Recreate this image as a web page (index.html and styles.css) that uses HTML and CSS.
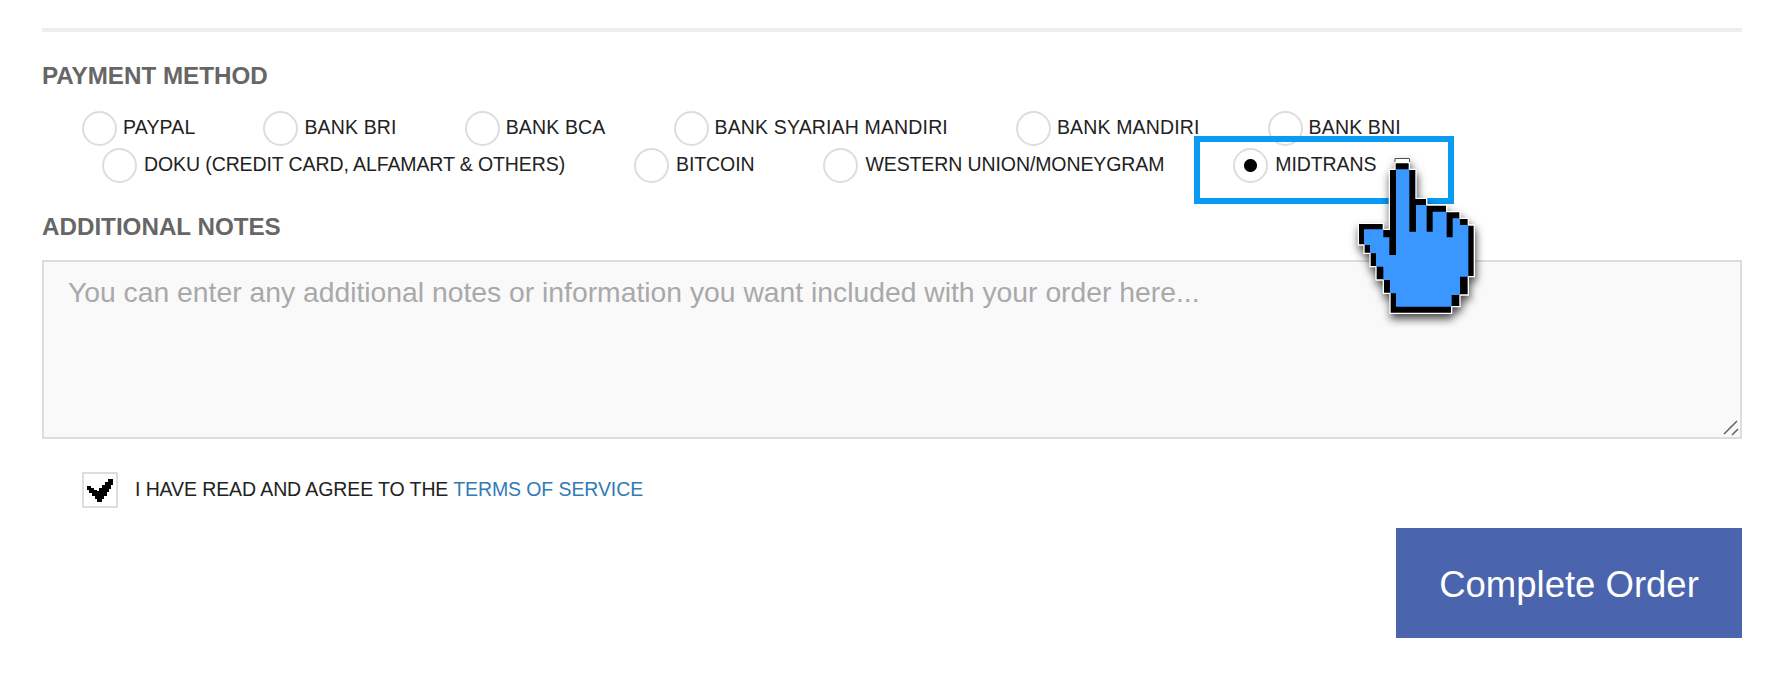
FILE: index.html
```html
<!DOCTYPE html>
<html lang="en">
<head>
<meta charset="UTF-8">
<title>Complete Order</title>
<link rel="stylesheet" href="styles.css">
</head>
<body>
<div class="order-form">
  <hr class="divider">

  <h3 class="section-title">PAYMENT METHOD</h3>
  <div class="methods">
    <div class="method-row">
      <label class="method"><input type="radio" name="method"><span>PAYPAL</span></label>
      <label class="method"><input type="radio" name="method"><span>BANK BRI</span></label>
      <label class="method"><input type="radio" name="method"><span>BANK BCA</span></label>
      <label class="method"><input type="radio" name="method"><span>BANK SYARIAH MANDIRI</span></label>
      <label class="method"><input type="radio" name="method"><span>BANK MANDIRI</span></label>
      <label class="method"><input type="radio" name="method"><span>BANK BNI</span></label>
    </div>
    <div class="method-row second">
      <label class="method"><input type="radio" name="method"><span>DOKU (CREDIT CARD, ALFAMART &amp; OTHERS)</span></label>
      <label class="method"><input type="radio" name="method"><span>BITCOIN</span></label>
      <label class="method"><input type="radio" name="method"><span>WESTERN UNION/MONEYGRAM</span></label>
      <label class="method"><input type="radio" name="method" checked><span>MIDTRANS</span></label>
    </div>
  </div>

  <h3 class="section-title notes-title">ADDITIONAL NOTES</h3>
  <div class="notes-wrap">
    <textarea class="notes" placeholder="You can enter any additional notes or information you want included with your order here..."></textarea>
    <svg class="resize-grip" width="16" height="16" viewBox="0 0 16 16"><path d="M1 14 L14 1 M9 15 L15 9" stroke="#666" stroke-width="1.6" fill="none"/></svg>
  </div>

  <div class="terms">
    <span class="check-box">
      <svg width="32" height="32" viewBox="0 0 32 32"><polygon points="3,12 7,12 7,14 10,14 10,16 13,16 13,17 15,17 15,14 18,14 18,11 21,11 21,8 24,8 24,5 29,5 29,11 27,11 27,15 25,15 25,18 23,18 23,22 20,22 20,25 18,25 18,28 13,28 13,25 11,25 11,22 8,22 8,19 5,19 5,16 3,16" fill="#000"/></svg>
    </span>
    <span class="terms-text">I HAVE READ AND AGREE TO THE <a href="#">TERMS OF SERVICE</a></span>
  </div>

  <div class="actions">
    <button class="complete-btn" type="button">Complete Order</button>
  </div>
</div>

<!-- Markup added on top of the screenshot -->
<div class="highlight"></div>
<svg class="hand" width="150" height="180" viewBox="0 0 450 540">
  <rect x="165" y="26" width="43" height="14" fill="#fff" stroke="#000" stroke-width="2"/>
  <polygon fill="#000" stroke="#fff" stroke-width="4" points="148,58 165,58 165,38 208,38 208,58 228,58 228,145 260,145 260,165 320,165 320,185 360,185 360,205 385,205 385,225 403,225 403,380 385,380 385,435 360,435 360,470 335,470 335,490 150,490 150,430 130,430 130,390 108,390 108,350 90,350 90,310 72,310 72,285 55,285 55,220 130,220 130,238 148,238"/>
  <polygon fill="#3a97ff" points="168,58 208,58 208,245 228,245 228,165 260,165 260,245 278,245 278,185 320,185 320,262 338,262 338,205 360,205 360,225 385,225 385,380 360,380 360,435 335,435 335,470 168,470 168,430 150,430 150,390 130,390 130,350 108,350 108,310 90,310 90,285 72,285 72,238 130,238 130,262 148,262 148,315 168,315"/>
</svg>
</body>
</html>
```

FILE: styles.css
```css
body {
  margin: 0;
  background-color: #ffffff;
  color: #222222;
  font-family: "Liberation Sans", Arial, sans-serif;
  position: relative;
  height: 698px;
  overflow: hidden;
}
.order-form {
  padding: 28px 32px 0 42px;
}
.divider {
  height: 4px;
  margin: 0;
  border: none;
  background-color: #eeeeee;
}
.section-title {
  margin: 29px 0 0;
  color: #666666;
  font-size: 24.2px;
  font-weight: bold;
  line-height: 30px;
}
.methods {
  margin-top: 20px;
  display: flex;
  flex-direction: column;
  gap: 2px;
}
.method-row {
  display: flex;
  gap: 68px;
  padding-left: 40px;
  letter-spacing: 0.15px;
}
.method-row.second {
  gap: 69px;
  padding-left: 60px;
  letter-spacing: -0.1px;
}
.method {
  display: flex;
  align-items: center;
  gap: 6px;
  font-size: 19.5px;
  white-space: nowrap;
}
.method-row.second .method {
  gap: 7px;
}
.method span {
  margin-top: -2px;
}
.method input {
  appearance: none;
  width: 35px;
  height: 35px;
  margin: 0;
  border: 2px solid #dddddd;
  border-radius: 50%;
  background-color: #ffffff;
}
.method input:checked {
  background-image: radial-gradient(circle, #000000 6px, transparent 7px);
}
.notes-title {
  margin-top: 29px;
}
.notes-wrap {
  position: relative;
  margin-top: 18px;
}
.notes {
  display: block;
  width: 100%;
  height: 179px;
  padding: 12px 24px;
  box-sizing: border-box;
  border: 2px solid #dddddd;
  background-color: #f9f9f9;
  font-family: inherit;
  font-size: 28.3px;
  line-height: 36px;
  resize: none;
}
.notes::placeholder {
  color: #a9a9a9;
}
.resize-grip {
  position: absolute;
  right: 3px;
  bottom: 3px;
}
.terms {
  display: flex;
  align-items: center;
  gap: 17px;
  margin: 33px 0 0 40px;
}
.check-box {
  display: flex;
  width: 36px;
  height: 36px;
  box-sizing: border-box;
  border: 2px solid #dddddd;
}
.terms-text {
  margin-top: -2px;
  font-size: 19.5px;
  letter-spacing: -0.1px;
}
.terms-text a {
  color: #337ab7;
  text-decoration: none;
}
.actions {
  display: flex;
  justify-content: flex-end;
  margin-top: 20px;
}
.complete-btn {
  width: 346px;
  height: 110px;
  padding: 3px 0 0;
  border: none;
  background-color: #4a64ad;
  color: #ffffff;
  font-family: inherit;
  font-size: 36.5px;
}
.highlight {
  position: absolute;
  left: 1194px;
  top: 136px;
  width: 260px;
  height: 68px;
  box-sizing: border-box;
  border: 6px solid #0a9bf5;
}
.hand {
  position: absolute;
  left: 1340px;
  top: 150px;
  filter: drop-shadow(1px 5px 4px rgba(0, 0, 0, 0.7));
}
```
